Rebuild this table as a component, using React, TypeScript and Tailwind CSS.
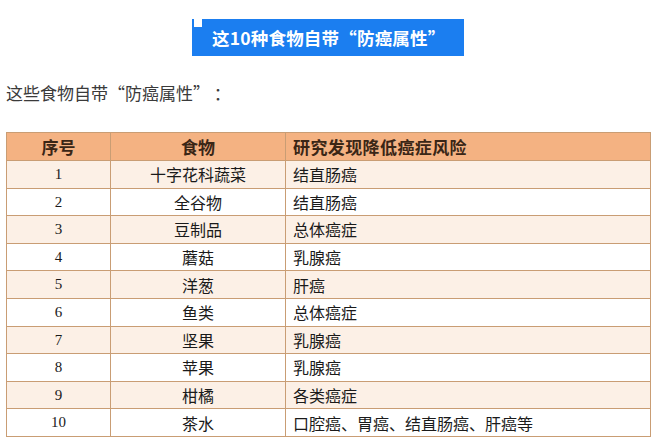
const rows: [string, string, string][] = [
  ["1", "十字花科蔬菜", "结直肠癌"],
  ["2", "全谷物", "结直肠癌"],
  ["3", "豆制品", "总体癌症"],
  ["4", "蘑菇", "乳腺癌"],
  ["5", "洋葱", "肝癌"],
  ["6", "鱼类", "总体癌症"],
  ["7", "坚果", "乳腺癌"],
  ["8", "苹果", "乳腺癌"],
  ["9", "柑橘", "各类癌症"],
  ["10", "茶水", "口腔癌、胃癌、结直肠癌、肝癌等"],
];

const font = { fontFamily: '"Noto Sans CJK SC", "Liberation Sans", sans-serif' };

export default function App() {
  return (
    <div className="h-[440px] w-[660px] overflow-hidden bg-white" style={font}>
      {/* 标题条 */}
      <div className="pt-[19px]">
        <div className="relative ml-[192px] flex h-[37px] w-[272px] items-center bg-[#1b7ef0] pl-[20px]">
          <span className="absolute left-[2px] top-0 h-[8px] w-[8px] bg-white" />
          <span className="text-[17.5px] font-bold leading-none tracking-[0.2px] text-white">这10种食物自带“防癌属性”</span>
        </div>
      </div>

      <p className="mt-[26px] pl-[6px] text-[17px] leading-[22px] text-[#3a3a3a]">
        这些食物自带“防癌属性” ：
      </p>

      <table className="ml-[6px] mt-[28px] w-[645px] table-fixed border-collapse text-[#1a1a1a]">
        <colgroup>
          <col className="w-[104px]" />
          <col className="w-[175px]" />
          <col />
        </colgroup>
        <thead>
          <tr className="h-[28px] bg-[#f4b282] text-[17px] font-bold text-[#3a2616]">
            <th className="border border-[#c99d74] p-0 text-center">序号</th>
            <th className="border border-[#c99d74] p-0 text-center">食物</th>
            <th className="border border-[#c99d74] px-[7px] py-0 text-left tracking-[0.4px]">研究发现降低癌症风险</th>
          </tr>
        </thead>
        <tbody className="text-[16px]">
          {rows.map(([no, food, risk], i) => (
            <tr key={no} className={i % 2 === 0 ? "h-[27.6px] bg-[#fcf0e6]" : "h-[27.6px] bg-white"}>
              <td className="border border-[#c99d74] p-0 text-center font-['Liberation_Serif',serif] text-[15px]">{no}</td>
              <td className="border border-[#c99d74] p-0 text-center">{food}</td>
              <td className="border border-[#c99d74] px-[7px] py-0 text-left">{risk}</td>
            </tr>
          ))}
        </tbody>
      </table>
    </div>
  );
}
